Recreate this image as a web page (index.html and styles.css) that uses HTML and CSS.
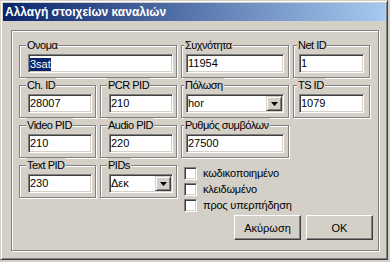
FILE: index.html
```html
<!DOCTYPE html>
<html lang="el">
  <head>
    <meta charset="UTF-8" />
    <title>Αλλαγή στοιχείων καναλιών</title>
    <link rel="stylesheet" href="styles.css">
  </head>
  <body>
    <div class="window">
      <div class="titlebar">Αλλαγή στοιχείων καναλιών</div>
      <div class="panel">
        <div class="fields">
          <div class="group span2">
            <span class="caption">Ονομα</span>
            <div class="edit"><span class="sel">3sat</span></div>
          </div>
          <div class="group wide">
            <span class="caption">Συχνότητα</span>
            <div class="edit">11954</div>
          </div>
          <div class="group narrow">
            <span class="caption">Net ID</span>
            <div class="edit">1</div>
          </div>

          <div class="group">
            <span class="caption">Ch. ID</span>
            <div class="edit">28007</div>
          </div>
          <div class="group">
            <span class="caption">PCR PID</span>
            <div class="edit">210</div>
          </div>
          <div class="group wide">
            <span class="caption">Πόλωση</span>
            <div class="edit combo">
              <span class="value">hor</span>
              <span class="drop"><svg width="7" height="4" viewBox="0 0 7 4"><polygon points="0,0 7,0 3.5,4" fill="#000"/></svg></span>
            </div>
          </div>
          <div class="group narrow">
            <span class="caption">TS ID</span>
            <div class="edit">1079</div>
          </div>

          <div class="group">
            <span class="caption">Video PID</span>
            <div class="edit">210</div>
          </div>
          <div class="group">
            <span class="caption">Audio PID</span>
            <div class="edit">220</div>
          </div>
          <div class="group wide">
            <span class="caption">Ρυθμός συμβόλων</span>
            <div class="edit">27500</div>
          </div>
          <div></div>

          <div class="group">
            <span class="caption">Text PID</span>
            <div class="edit">230</div>
          </div>
          <div class="group">
            <span class="caption">PIDs</span>
            <div class="edit combo">
              <span class="value">Δεκ</span>
              <span class="drop"><svg width="7" height="4" viewBox="0 0 7 4"><polygon points="0,0 7,0 3.5,4" fill="#000"/></svg></span>
            </div>
          </div>
          <div class="checks">
            <label class="check"><span class="box"></span>κωδικοποιημένο</label>
            <label class="check"><span class="box"></span>κλειδωμένο</label>
            <label class="check"><span class="box"></span>προς υπερπήδηση</label>
          </div>
        </div>
        <div class="buttons">
          <button class="btn">Ακύρωση</button>
          <button class="btn">OK</button>
        </div>
      </div>
    </div>
  </body>
</html>
```

FILE: styles.css
```css
body {
  margin: 0;
  background: #d4d0c8;
  font-family: "Liberation Sans", Arial, sans-serif;
  font-size: 11px;
  color: #000;
}
.window {
  box-sizing: border-box;
  width: 388px;
  height: 260px;
  padding: 2px;
  background: #d4d0c8;
  border: 1px solid;
  border-color: #d4d0c8 #404040 #404040 #d4d0c8;
  box-shadow: inset 1px 1px 0 #fff, inset -1px -1px 0 #808080;
}
.titlebar {
  height: 18px;
  line-height: 18px;
  padding-left: 2px;
  color: #fff;
  font-weight: bold;
  font-size: 12px;
  background: linear-gradient(to right, #0a246a, #a6caf0);
}
.panel {
  box-sizing: border-box;
  width: 368px;
  height: 221px;
  margin: 9px 0 0 8px;
  padding: 14px 5px 0 7px;
  border: 1px solid #808080;
  box-shadow: inset 1px 1px 0 #fff, 1px 1px 0 #fff;
}
.fields {
  display: grid;
  grid-template-columns: 77px 77px 108px 77px;
  column-gap: 4px;
  row-gap: 7px;
  align-items: start;
}
.group {
  position: relative;
  height: 33px;
  box-sizing: border-box;
  padding: 8px 3px 0 8px;
  border: 1px solid #808080;
  box-shadow: inset 1px 1px 0 #fff, 1px 1px 0 #fff;
}
.group.span2 {
  grid-column: span 2;
}
.group.wide {
  padding-left: 4px;
  padding-right: 4px;
}
.group.narrow {
  padding-left: 5px;
  padding-right: 5px;
}
.caption {
  position: absolute;
  top: -8px;
  left: 6px;
  padding: 0 1px;
  line-height: 14px;
  letter-spacing: -0.5px;
  background: #d4d0c8;
  white-space: nowrap;
}
.group.wide .caption {
  left: 2px;
}
.group.narrow .caption {
  left: 3px;
}
.edit {
  box-sizing: border-box;
  height: 19px;
  padding-left: 1px;
  line-height: 17px;
  background: #fff;
  border: 1px solid;
  border-color: #808080 #fff #fff #808080;
  box-shadow: inset 1px 1px 0 #404040, inset -1px -1px 0 #d4d0c8;
  white-space: nowrap;
}
.sel {
  display: inline-block;
  line-height: 13px;
  vertical-align: middle;
  background: #0a246a;
  color: #fff;
}
.combo {
  display: flex;
}
.combo .value {
  flex: 1;
}
.drop {
  width: 16px;
  margin: 1px;
  box-sizing: border-box;
  display: flex;
  align-items: center;
  justify-content: center;
  background: #d4d0c8;
  border: 1px solid;
  border-color: #d4d0c8 #404040 #404040 #d4d0c8;
  box-shadow: inset 1px 1px 0 #fff, inset -1px -1px 0 #808080;
}
.checks {
  grid-column: span 2;
  margin-left: 3px;
}
.check {
  display: flex;
  align-items: center;
  height: 16px;
  gap: 6px;
  letter-spacing: -0.2px;
  white-space: nowrap;
}
.box {
  width: 13px;
  height: 13px;
  box-sizing: border-box;
  background: #fff;
  border: 1px solid;
  border-color: #808080 #fff #fff #808080;
  box-shadow: inset 1px 1px 0 #404040, inset -1px -1px 0 #d4d0c8;
}
.buttons {
  display: flex;
  justify-content: flex-end;
  gap: 5px;
  margin-top: 2px;
}
.btn {
  width: 67px;
  height: 25px;
  padding: 0;
  font-family: inherit;
  font-size: 11px;
  color: #000;
  background: #d4d0c8;
  border: 1px solid;
  border-color: #fff #404040 #404040 #fff;
  box-shadow: inset -1px -1px 0 #808080;
}
```
